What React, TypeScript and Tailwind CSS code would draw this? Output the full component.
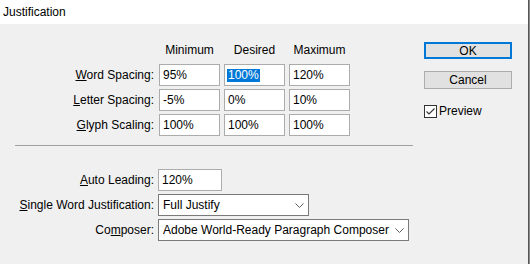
import { ReactNode } from 'react'

function Field({ value, selected, w = 'w-[61px]' }: { value: string; selected?: boolean; w?: string }) {
  return (
    <div className={`${w} h-[22px] border border-[#acacac] bg-white flex items-center pl-[2px]`}>
      {selected ? (
        <span className="bg-[#0078d7] text-white leading-[13px] pl-px pr-px">{value}</span>
      ) : (
        <span className="pl-px">{value}</span>
      )}
    </div>
  )
}

function Chevron() {
  return (
    <svg width="9" height="5" viewBox="0 0 9 5" className="shrink-0">
      <path d="M0.5 0.5 L4.5 4.5 L8.5 0.5" fill="none" stroke="#606060" strokeWidth="1" />
    </svg>
  )
}

function Select({ value, w }: { value: string; w: string }) {
  return (
    <div className={`${w} h-[22px] border border-[#7a7a7a] bg-white flex items-center justify-between pl-[4px] pr-[4px]`}>
      <span>{value}</span>
      <Chevron />
    </div>
  )
}

function Label({ children }: { children: ReactNode }) {
  return <div className="w-[139px] text-right whitespace-nowrap">{children}</div>
}

const ROWS = [
  { label: <><u>W</u>ord Spacing:</>, vals: ['95%', '100%', '120%'] },
  { label: <><u>L</u>etter Spacing:</>, vals: ['-5%', '0%', '10%'] },
  { label: <><u>G</u>lyph Scaling:</>, vals: ['100%', '100%', '100%'] },
]

export default function App() {
  return (
    <div
      className="w-[530px] h-[264px] flex bg-[#f0f0f0] text-[12px] text-black overflow-hidden"
      style={{ fontFamily: '"Liberation Sans", Arial, sans-serif' }}
    >
      <div className="w-[528px] flex flex-col">
        {/* title bar */}
        <div className="h-[24px] bg-white flex items-center pl-[3px] shrink-0">Justification</div>

        <div className="flex">
          {/* left */}
          <div className="flex flex-col pl-[15px] w-[413px]">
            <div className="mt-[18px] h-[16px] flex items-center">
              <div className="w-[144px]" />
              <div className="flex gap-[4px]">
                <div className="w-[61px] text-center">Minimum</div>
                <div className="w-[61px] text-center">Desired</div>
                <div className="w-[61px] text-center">Maximum</div>
              </div>
            </div>

            <div className="mt-[6px] flex flex-col gap-[3px]">
              {ROWS.map((r, i) => (
                <div key={i} className="flex items-center">
                  <Label>{r.label}</Label>
                  <div className="flex gap-[4px] ml-[5px]">
                    {r.vals.map((v, j) => (
                      <Field key={j} value={v} selected={i === 0 && j === 1} />
                    ))}
                  </div>
                </div>
              ))}
            </div>

            <div className="mt-[9px] h-px bg-[#a0a0a0]" />

            <div className="mt-[23px] flex flex-col gap-[3px]">
              <div className="flex items-center">
                <Label><u>A</u>uto Leading:</Label>
                <div className="ml-[4px]">
                  <Field value="120%" w="w-[64px]" />
                </div>
              </div>
              <div className="flex items-center">
                <Label><u>S</u>ingle Word Justification:</Label>
                <div className="ml-[4px]">
                  <Select value="Full Justify" w="w-[151px]" />
                </div>
              </div>
              <div className="flex items-center">
                <Label>Co<u>m</u>poser:</Label>
                <div className="ml-[4px]">
                  <Select value="Adobe World-Ready Paragraph Composer" w="w-[251px]" />
                </div>
              </div>
            </div>
          </div>

          {/* right buttons */}
          <div className="flex flex-col ml-[11px] pt-[18px]">
            <button className="w-[88px] h-[17px] border-2 border-[#0078d7] bg-[#e1e1e1] flex items-center justify-center leading-none">
              OK
            </button>
            <button className="mt-[12px] w-[88px] h-[18px] border border-[#adadad] bg-[#e1e1e1] flex items-center justify-center leading-none">
              Cancel
            </button>
            <div className="mt-[13px] flex items-center gap-[2px]">
              <div className="w-[13px] h-[13px] border border-[#333333] bg-white flex items-center justify-center">
                <svg width="11" height="11" viewBox="0 0 11 11">
                  <path d="M1.5 5.5 L4 8 L9.5 2.5" fill="none" stroke="#333333" strokeWidth="1.1" />
                </svg>
              </div>
              <span>Preview</span>
            </div>
          </div>
        </div>
      </div>
      <div className="w-px h-full bg-[#555555]" />
      <div className="w-px h-full bg-[#8a8a8a]" />
    </div>
  )
}
